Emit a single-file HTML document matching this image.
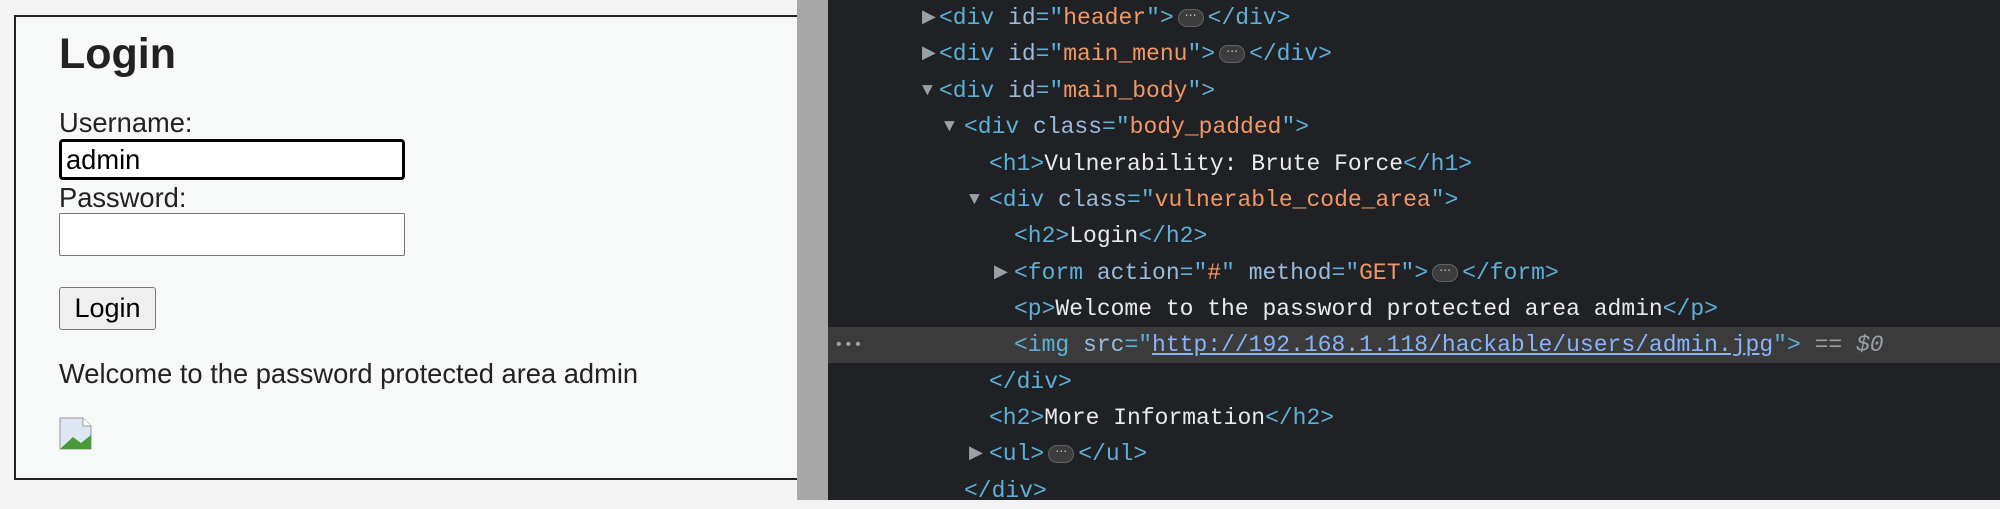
<!DOCTYPE html>
<html><head><meta charset="utf-8"><style>
body{margin:0;width:2000px;height:500px;overflow:hidden;background:#f3f3f3;position:relative;font-family:"Liberation Sans",sans-serif}
.box{position:absolute;left:14px;top:15px;width:790px;height:461px;border:2px solid #222;border-right:none;background:#f7f8f8}
.l{position:absolute;color:#222;font-size:27.3px;white-space:nowrap}
.sb{position:absolute;left:797px;top:0;width:31px;height:500px;background:#a7a7a7}
.dt{position:absolute;left:828px;top:0;width:1172px;height:500px;background:#202124;font-family:"Liberation Mono",monospace;font-size:23px}
.r{position:absolute;left:0;right:0;height:36px;line-height:36px;white-space:pre;color:#e8eaed}
.t{color:#5db0d7}.a{color:#9bbbdc}.v{color:#f29766}
.ar{position:absolute;color:#9aa0a6;font-size:18px}
.e{display:inline-block;width:26px;height:18px;border:1.5px solid #5f6368;border-radius:9px;background:#3c3c3c;vertical-align:middle;margin:0 4px;line-height:12px;font-size:12px;text-align:center;color:#ccc;box-sizing:border-box}
</style></head><body>
<div class="box"></div>
<div class="l" style="left:59px;top:30px;font-size:43px;font-weight:bold">Login</div>
<div class="l" style="left:59px;top:107px">Username:</div>
<div style="position:absolute;left:59px;top:139px;width:346px;height:41px;border:3px solid #000;border-radius:4px;background:#fff;box-sizing:border-box"></div>
<div class="l" style="left:66px;top:144px;color:#000">admin</div>
<div class="l" style="left:59px;top:182px">Password:</div>
<div style="position:absolute;left:59px;top:213px;width:346px;height:43px;border:1px solid #777;border-radius:2px;background:#fff;box-sizing:border-box"></div>
<div style="position:absolute;left:59px;top:287px;width:97px;height:43px;border:1px solid #777;border-radius:3px;background:#efefef;box-sizing:border-box;font-size:27px;text-align:center;line-height:41px;color:#000">Login</div>
<div class="l" style="left:59px;top:358px">Welcome to the password protected area admin</div>
<svg style="position:absolute;left:59px;top:417px" width="33" height="33" viewBox="0 0 33 33"><path d="M1 1H24L32 9V32H1Z" fill="#dfe8f2" stroke="#999"/><path d="M1 32L14 20L22 26L32 18V32Z" fill="#4a9a3a"/><path d="M24 1V9H32" fill="#fff" stroke="#999"/></svg>
<div class="sb"></div>
<div class="dt">
<div class="r" style="top:327px;background:#3b3b3c;height:36px"></div>
<div class="r" style="top:0px"><span class="ar" style="left:94px">▶</span><span style="position:absolute;left:111px"><span class="t">&lt;div </span><span class="a">id</span><span class="t">="</span><span class="v">header</span><span class="t">"&gt;</span><span class="e">⋯</span><span class="t">&lt;/div&gt;</span></span></div>
<div class="r" style="top:36px"><span class="ar" style="left:94px">▶</span><span style="position:absolute;left:111px"><span class="t">&lt;div </span><span class="a">id</span><span class="t">="</span><span class="v">main_menu</span><span class="t">"&gt;</span><span class="e">⋯</span><span class="t">&lt;/div&gt;</span></span></div>
<div class="r" style="top:73px"><span class="ar" style="left:94px">▼</span><span style="position:absolute;left:111px"><span class="t">&lt;div </span><span class="a">id</span><span class="t">="</span><span class="v">main_body</span><span class="t">"&gt;</span></span></div>
<div class="r" style="top:109px"><span class="ar" style="left:116px">▼</span><span style="position:absolute;left:136px"><span class="t">&lt;div </span><span class="a">class</span><span class="t">="</span><span class="v">body_padded</span><span class="t">"&gt;</span></span></div>
<div class="r" style="top:146px"><span style="position:absolute;left:161px"><span class="t">&lt;h1&gt;</span>Vulnerability: Brute Force<span class="t">&lt;/h1&gt;</span></span></div>
<div class="r" style="top:182px"><span class="ar" style="left:141px">▼</span><span style="position:absolute;left:161px"><span class="t">&lt;div </span><span class="a">class</span><span class="t">="</span><span class="v">vulnerable_code_area</span><span class="t">"&gt;</span></span></div>
<div class="r" style="top:218px"><span style="position:absolute;left:186px"><span class="t">&lt;h2&gt;</span>Login<span class="t">&lt;/h2&gt;</span></span></div>
<div class="r" style="top:255px"><span class="ar" style="left:166px">▶</span><span style="position:absolute;left:186px"><span class="t">&lt;form </span><span class="a">action</span><span class="t">="</span><span class="v">#</span><span class="t">" </span><span class="a">method</span><span class="t">="</span><span class="v">GET</span><span class="t">"&gt;</span><span class="e">⋯</span><span class="t">&lt;/form&gt;</span></span></div>
<div class="r" style="top:291px"><span style="position:absolute;left:186px"><span class="t">&lt;p&gt;</span>Welcome to the password protected area admin<span class="t">&lt;/p&gt;</span></span></div>
<div class="r" style="top:327px"><span style="position:absolute;left:6px;color:#9aa0a6;font-size:16px">•••</span><span style="position:absolute;left:186px"><span class="t">&lt;img </span><span class="a">src</span><span class="t">="</span><span style="color:#8ab4f8;text-decoration:underline">http://192.168.1.118/hackable/users/admin.jpg</span><span class="t">"&gt;</span><span style="color:#9aa0a6"> == <i>$0</i></span></span></div>
<div class="r" style="top:364px"><span style="position:absolute;left:161px"><span class="t">&lt;/div&gt;</span></span></div>
<div class="r" style="top:400px"><span style="position:absolute;left:161px"><span class="t">&lt;h2&gt;</span>More Information<span class="t">&lt;/h2&gt;</span></span></div>
<div class="r" style="top:436px"><span class="ar" style="left:141px">▶</span><span style="position:absolute;left:161px"><span class="t">&lt;ul&gt;</span><span class="e">⋯</span><span class="t">&lt;/ul&gt;</span></span></div>
<div class="r" style="top:473px"><span style="position:absolute;left:136px"><span class="t">&lt;/div&gt;</span></span></div>
</div>
</body></html>
